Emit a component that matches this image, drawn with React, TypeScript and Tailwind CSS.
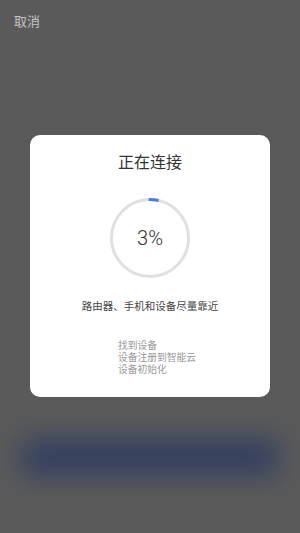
import React from "react";

export default function App() {
  const r = 38.5;
  const cx = 41;
  const cy = 41;
  const toXY = (deg: number) => {
    const a = ((deg - 90) * Math.PI) / 180;
    return [cx + r * Math.cos(a), cy + r * Math.sin(a)];
  };
  const [x1, y1] = toXY(-2);
  const [x2, y2] = toXY(13);
  return (
    <div
      className="relative w-[300px] h-[533px] overflow-hidden bg-[#5a5a5a]"
      style={{ fontFamily: '"Noto Sans CJK SC", "Noto Sans", sans-serif' }}
    >
      <div className="absolute left-[22px] right-[22px] top-[440px] h-[34px] bg-[#2c3a62] blur-[14px] opacity-90" />
      <div className="relative flex flex-col">
        <div className="h-[43px] pl-[14px] pt-[12px] text-[13px] leading-[18px] text-[#c4c4c4]">取消</div>
        <div className="mt-[92px] mx-[30px] h-[262px] bg-white rounded-[10px] flex flex-col items-center">
          <div className="mt-[15px] text-[16px] leading-[22px] text-[#333]">正在连接</div>
          <div className="mt-[25px] relative w-[82px] h-[82px]">
            <svg width="82" height="82" viewBox="0 0 82 82" className="absolute inset-0">
              <circle cx={cx} cy={cy} r={r} fill="none" stroke="#e0e0e0" strokeWidth="3" />
              <path
                d={`M ${x1} ${y1} A ${r} ${r} 0 0 1 ${x2} ${y2}`}
                fill="none"
                stroke="#4a7fe0"
                strokeWidth="3"
              />
            </svg>
            <div
              className="absolute inset-0 flex items-center justify-center text-[20px] font-light text-[#333]"
              style={{ fontFamily: '"Roboto", "Noto Sans", sans-serif' }}
            >
              3%
            </div>
          </div>
          <div className="mt-[20px] text-[10.5px] leading-[14px] text-[#444]">路由器、手机和设备尽量靠近</div>
          <div className="mt-[26px] self-start ml-[88px] flex flex-col text-[9.75px] leading-[12px] text-[#9a9a9a]">
            <div>找到设备</div>
            <div>设备注册到智能云</div>
            <div>设备初始化</div>
          </div>
        </div>
      </div>
    </div>
  );
}
